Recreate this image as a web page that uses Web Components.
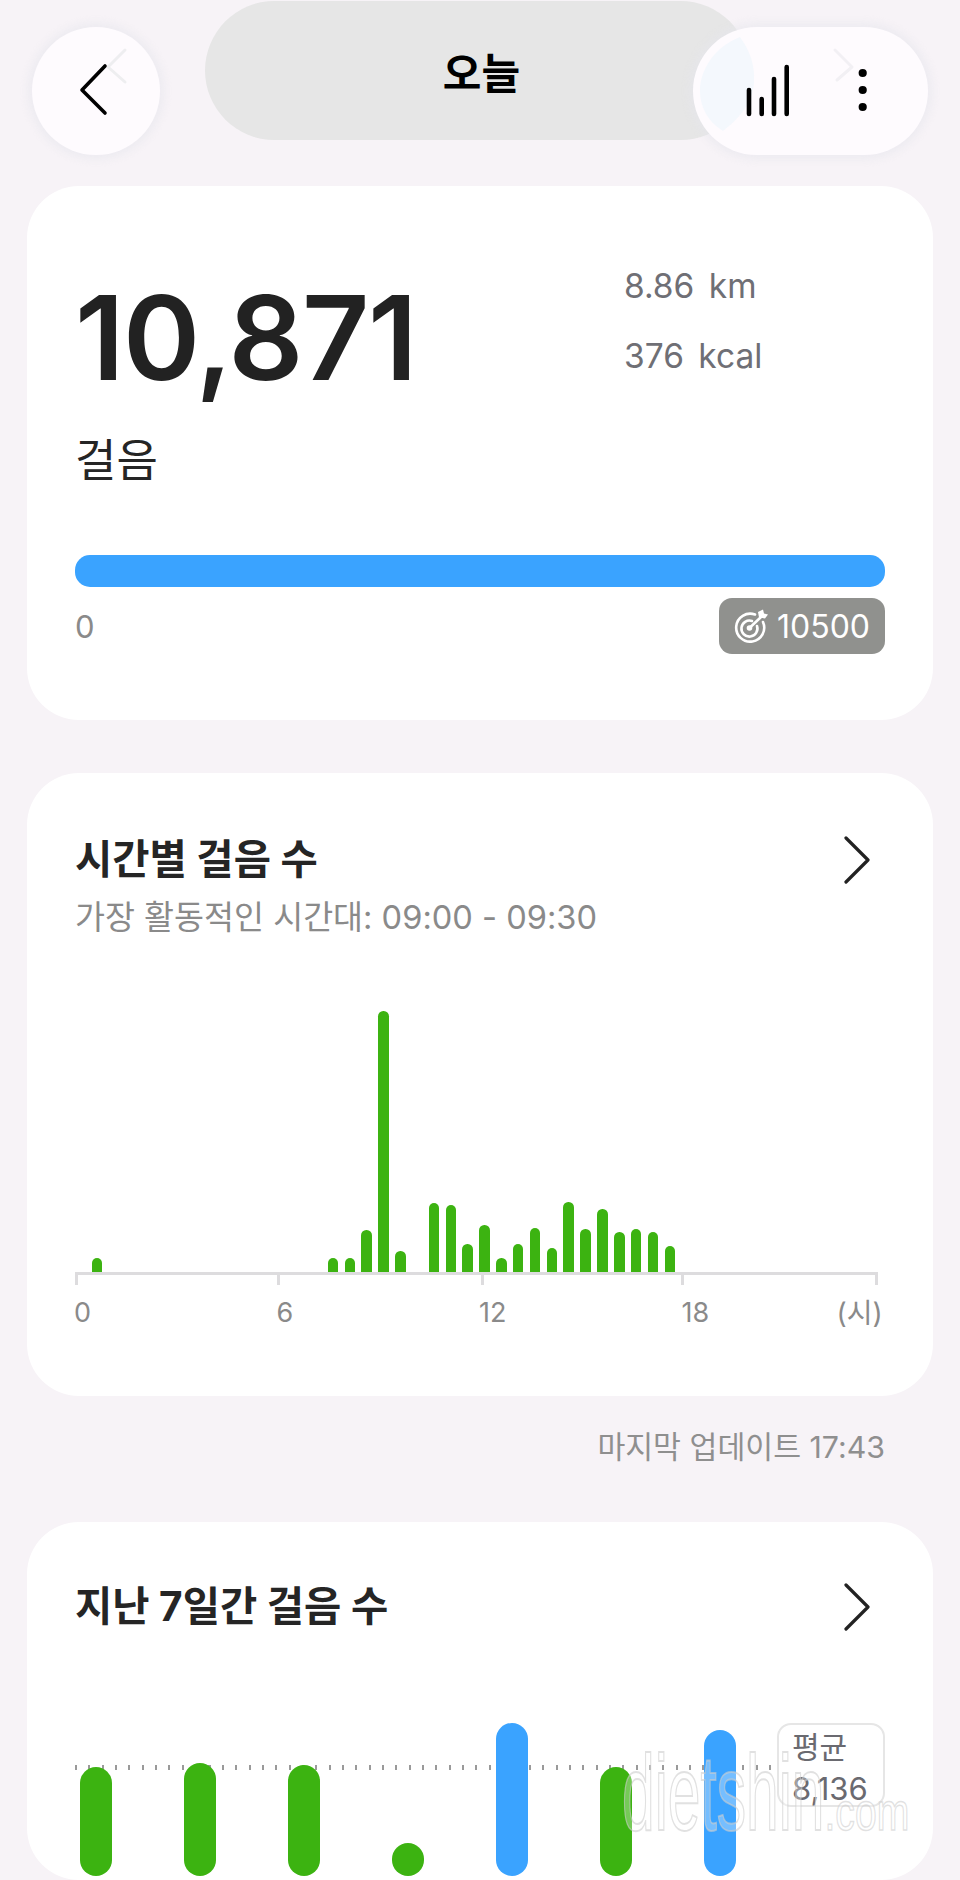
<!DOCTYPE html>
<html lang="ko">
  <head>
    <meta charset="UTF-8" />
    <title>오늘</title>
    <style>
      html, body { margin: 0; height: 1880px; overflow: hidden; }
      body {
        background: #f7f3f7;
        font-family: Inter, "Noto Sans CJK KR", sans-serif;
      }
      .page { display: flex; flex-direction: column; }
    </style>
  </head>
  <body>
    <template id="chevron-tmpl">
      <style>
        :host { display: block; width: 26px; height: 48px; }
        svg { display: block; }
      </style>
      <svg width="26" height="48" viewBox="0 0 26 48" fill="none" stroke="#222" stroke-width="3.2" stroke-linecap="round" stroke-linejoin="round"><path d="M2 2 L24 24 L2 46" /></svg>
    </template>

    <template id="top-tmpl">
      <style>
        :host { display: flex; align-items: flex-start; height: 186px; padding-left: 32px; box-sizing: border-box; }
        .btn {
          margin-top: 27px; height: 128px; background: #fefbfe; border-radius: 64px;
          box-shadow: 0 0 8px 4px rgba(230, 230, 236, .6);
          position: relative; z-index: 1; flex: none;
        }
        .back { width: 128px; }
        .title {
          margin: 1px 0 0 45px; width: 545px; height: 139px; flex: none; border-radius: 70px; background: #e6e6e6;
          display: flex; align-items: center; justify-content: center; padding-left: 8px; box-sizing: border-box;
          font: 700 42px Inter, "Noto Sans CJK KR", sans-serif; color: #000;
        }
        .right { width: 235px; margin-left: -57px; }
        svg { position: absolute; left: 0; top: 0; }
      </style>
      <div class="btn back">
        <svg width="128" height="128" viewBox="0 0 128 128" fill="none" stroke-linecap="round" stroke-linejoin="round">
          <path d="M93 23 L76 40 L93 55" stroke="#eeeef0" stroke-width="3" />
          <path d="M73 39 L50 63 L73 86" stroke="#000" stroke-width="3.6" />
        </svg>
      </div>
      <div class="title"><slot></slot></div>
      <div class="btn right">
        <svg width="235" height="128" viewBox="0 0 235 128" fill="none" stroke-linecap="round" stroke-linejoin="round">
          <path d="M47 10 C58 25 62 40 61 55 C60 75 48 90 30 104 C15 95 7 80 7 64 C7 40 25 18 47 10 Z" fill="#f4f8fd" />
          <path d="M142 23 L159 40 L144 53" stroke="#f2f0f4" stroke-width="3" />
          <g stroke="#000" stroke-width="4.6">
            <path d="M56 63 V87" /><path d="M68.7 72 V87" /><path d="M81 52 V87" /><path d="M93.7 40 V87" />
          </g>
          <g fill="#000"><circle cx="169.7" cy="46" r="4.1" /><circle cx="169.7" cy="63" r="4.1" /><circle cx="169.7" cy="80" r="4.1" /></g>
        </svg>
      </div>
    </template>

    <template id="card-tmpl">
      <style>
        :host { display: block; margin: 0 27px; background: #fff; border-radius: 52px; padding: 0 48px; box-sizing: border-box; }
      </style>
      <slot></slot>
    </template>

    <template id="head-tmpl">
      <style>
        :host { display: flex; justify-content: space-between; align-items: center; padding-right: 15px; color: #252525; font-size: 40.5px; font-weight: 700; line-height: 48px; }
      </style>
      <slot></slot>
      <step-chevron></step-chevron>
    </template>

    <template id="summary-tmpl">
      <style>
        :host { display: block; height: 534px; color: #252525; }
        .top { display: flex; justify-content: space-between; }
        .count { font-size: 117px; font-weight: 600; line-height: 130px; margin-top: 87px; letter-spacing: -1.4px; color: #222; }
        .label { font-size: 45px; line-height: 54px; margin-top: 31px; }
        .stats { width: 261px; padding-top: 77px; color: #6f6f75; font-size: 33.5px; line-height: 46px; }
        .stats div + div { margin-top: 24px; }
        .stats span { margin-left: 5px; }
        .bar { height: 32px; border-radius: 15px; background: #3aa3ff; margin-top: 67px; }
        .scale { display: flex; justify-content: space-between; align-items: center; margin-top: 11px; color: #8a8a8a; font-size: 31px; }
        .goal { display: flex; align-items: center; gap: 8px; height: 56px; width: 166px; box-sizing: border-box; padding-left: 14px; border-radius: 13px; background: #90918e; color: #fff; font-size: 32px; }
        svg { display: block; flex: none; }
      </style>
      <div class="top">
        <div>
          <div class="count"><slot name="count"></slot></div>
          <div class="label"><slot name="label"></slot></div>
        </div>
        <div class="stats">
          <div>8.86 <span>km</span></div>
          <div>376 <span>kcal</span></div>
        </div>
      </div>
      <div class="bar"></div>
      <div class="scale">
        <span>0</span>
        <div class="goal">
          <svg width="36" height="36" viewBox="0 0 36 36" fill="none" stroke="#fff" stroke-linecap="round">
            <path d="M22 6.5 A14 14 0 1 0 30 14" stroke-width="2.6" />
            <path d="M19 13 A8 8 0 1 0 24 18" stroke-width="2.6" />
            <circle cx="16.5" cy="20" r="2.8" fill="#fff" stroke="none" />
            <path d="M17 19.5 L28 9" stroke-width="2.6" />
            <path d="M25 4 L26 9.5 L32 10.5 L35 6.5 L31 5.5 L30 1.5 Z" fill="#fff" stroke="none" />
          </svg>
          <span>10500</span>
        </div>
      </div>
    </template>

    <template id="hourly-tmpl">
      <style>
        :host { display: block; height: 623px; padding-top: 63px; box-sizing: border-box; }
        .sub { margin-top: 11px; color: #8a8a8a; font-size: 32.6px; line-height: 44px; }
        .plot { margin-top: 63px; height: 270px; display: flex; align-items: flex-end; }
        .slot { flex: none; width: 16.85px; display: flex; align-items: flex-end; }
        .bar { width: 10.5px; background: #3cb311; border-radius: 5.25px 5.25px 0 0; }
        .axis { height: 13px; box-sizing: border-box; border-top: 3px solid #dddcde; width: 803px; display: flex; }
        .axis i { width: 3px; height: 10px; background: #dddcde; flex: none; }
        .axis i:nth-child(2) { margin-left: 199px; }
        .axis i:nth-child(3) { margin-left: 201px; }
        .axis i:nth-child(4) { margin-left: 197px; }
        .axis i:nth-child(5) { margin-left: 191px; }
        .ticks { margin-top: 10px; width: 801px; display: flex; color: #8a8a8a; font-size: 27px; line-height: 36px; margin-left: -1px; }
        .ticks span { width: 202.5px; flex: none; }
        .ticks span:last-child { width: auto; flex: 1; text-align: right; font-size: 28px; }
      </style>
      <div class="head"><slot name="head"></slot></div>
      <div class="sub"><slot name="sub"></slot></div>
      <div class="plot"></div>
      <div class="axis"><i></i><i></i><i></i><i></i><i></i></div>
      <div class="ticks"><span>0</span><span>6</span><span>12</span><span style="width:155px">18</span><span>(시)</span></div>
    </template>

    <template id="week-tmpl">
      <style>
        :host { display: block; height: 358px; padding-top: 61px; box-sizing: border-box; overflow: hidden; position: relative; }
        .chart { position: relative; margin-top: 92px; height: 153px; padding-top: 42px; box-sizing: border-box; }
        .line { height: 5px; width: 697px; background: repeating-linear-gradient(90deg, #9a9a9a 0 2px, transparent 2px 13.35px); }
        .bars { position: absolute; left: 5px; bottom: 0; display: flex; gap: 72px; align-items: flex-end; }
        .bars i { display: block; width: 32px; border-radius: 16px; background: #3cb311; }
        .bars i.over { background: #3aa3ff; }
        .avg { position: absolute; right: 0; top: 0; width: 108px; height: 84px; box-sizing: border-box; padding: 3px 0 0 13px; border: 2px solid #e6e6e6; border-radius: 14px; background: #fff; color: #6a6a70; font-size: 30px; line-height: 38px; }
        .avg div + div { margin-top: 4px; font-size: 31px; }
      </style>
      <slot name="head"></slot>
      <div class="chart">
        <div class="line"></div>
        <div class="bars"></div>
        <div class="avg"><div>평균</div><div>8,136</div></div>
      </div>
    </template>

    <template id="mark-tmpl">
      <style>
        :host { display: block; position: absolute; left: 622px; top: 1731px; width: 290px; height: 110px; pointer-events: none; }
        .m {
          position: absolute; left: 0; top: 0; transform: scale(.89, 1.62); transform-origin: 0 0;
          font: 400 66px "Liberation Sans", sans-serif; white-space: nowrap;
          color: rgba(255, 255, 255, .3); -webkit-text-stroke: 1.2px rgba(205, 205, 205, .6);
        }
        .m span { display: inline-block; font-size: 44px; transform: scaleY(.76); transform-origin: 0 80%; }
      </style>
      <div class="m">dietshin<span>.com</span></div>
    </template>

    <script>
      function makeShadow(el, id) {
        el.attachShadow({ mode: "open" });
        el.shadowRoot.append(document.getElementById(id).content.cloneNode(true));
      }

      customElements.define("step-chevron", class extends HTMLElement {
        connectedCallback() { makeShadow(this, "chevron-tmpl"); }
      });
      customElements.define("step-topbar", class extends HTMLElement {
        connectedCallback() { makeShadow(this, "top-tmpl"); }
      });
      customElements.define("step-card", class extends HTMLElement {
        connectedCallback() { makeShadow(this, "card-tmpl"); }
      });
      customElements.define("step-head", class extends HTMLElement {
        connectedCallback() { makeShadow(this, "head-tmpl"); }
      });
      customElements.define("step-summary", class extends HTMLElement {
        connectedCallback() { makeShadow(this, "summary-tmpl"); }
      });
      customElements.define("step-watermark", class extends HTMLElement {
        connectedCallback() { makeShadow(this, "mark-tmpl"); }
      });

      customElements.define("step-hourly", class extends HTMLElement {
        connectedCallback() {
          makeShadow(this, "hourly-tmpl");
          const plot = this.shadowRoot.querySelector(".plot");
          const heights = { 1: 14, 15: 14, 16: 14, 17: 42, 18: 261, 19: 21, 21: 69, 22: 67, 23: 28, 24: 47, 25: 14, 26: 28, 27: 44, 28: 24, 29: 70, 30: 43, 31: 63, 32: 40, 33: 43, 34: 40, 35: 26 };
          for (let i = 0; i < 36; i++) {
            const s = document.createElement("div");
            s.className = "slot";
            if (heights[i]) {
              const b = document.createElement("div");
              b.className = "bar";
              b.style.height = heights[i] + "px";
              s.append(b);
            }
            plot.append(s);
          }
        }
      });

      customElements.define("step-week", class extends HTMLElement {
        connectedCallback() {
          makeShadow(this, "week-tmpl");
          const bars = this.shadowRoot.querySelector(".bars");
          [[109], [113], [111], [33], [153, 1], [109], [146, 1]].forEach(([h, over]) => {
            const b = document.createElement("i");
            b.style.height = h + "px";
            if (over) b.className = "over";
            bars.append(b);
          });
        }
      });
    </script>

    <div class="page">
      <step-topbar>오늘</step-topbar>
      <step-card>
        <step-summary>
          <span slot="count">10,871</span>
          <span slot="label">걸음</span>
        </step-summary>
      </step-card>
      <step-card style="margin-top:53px">
        <step-hourly>
          <step-head slot="head">시간별 걸음 수</step-head>
          <span slot="sub">가장 활동적인 시간대: 09:00 - 09:30</span>
        </step-hourly>
      </step-card>
      <div style="margin:31px 75px 0 0;text-align:right;color:#8f8f8f;font-size:30.3px;line-height:40px">마지막 업데이트 17:43</div>
      <step-card style="margin-top:55px">
        <step-week>
          <step-head slot="head">지난 7일간 걸음 수</step-head>
        </step-week>
      </step-card>
    </div>
    <step-watermark></step-watermark>
  </body>
</html>
